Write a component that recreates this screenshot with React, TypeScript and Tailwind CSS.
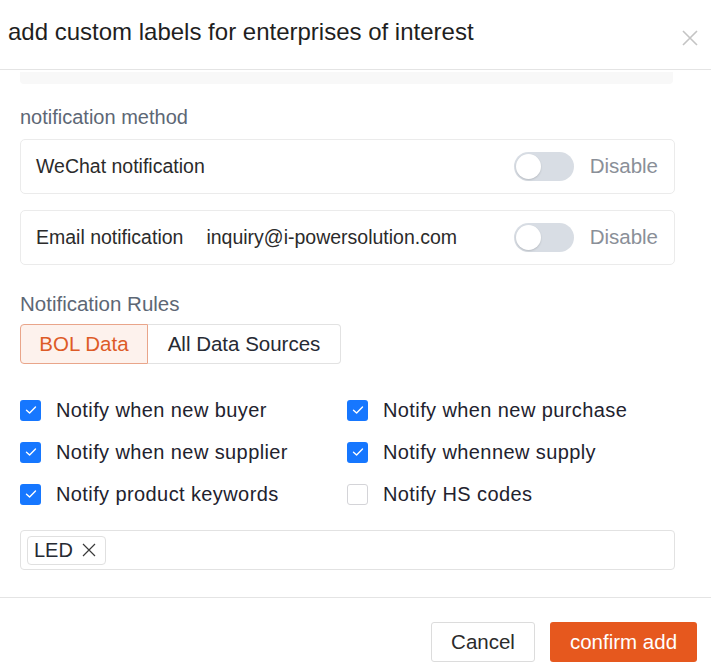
import React from 'react';

const font = { fontFamily: '"Liberation Sans", Arial, sans-serif' };

const Toggle: React.FC = () => (
    <div className="w-[60px] h-[29px] rounded-full bg-[#d8dde4] flex items-center px-[2px]">
        <div className="w-[25px] h-[25px] rounded-full bg-white shadow-[0_1px_2px_rgba(0,0,0,0.15)]" />
    </div>
);

const Check: React.FC<{ checked: boolean; label: string }> = ({ checked, label }) => (
    <div className="flex items-center h-[42px] gap-[15px]">
        {checked ? (
            <div className="w-[21px] h-[21px] rounded-[3px] bg-[#1677ff] flex items-center justify-center">
                <svg width="12" height="10" viewBox="0 0 12 10" fill="none">
                    <path d="M1.5 5.2 L4.6 8 L10.5 2" stroke="white" strokeWidth="1.4" strokeLinecap="round" strokeLinejoin="round" />
                </svg>
            </div>
        ) : (
            <div className="w-[21px] h-[21px] rounded-[3px] bg-white border border-[#d4d4d8]" />
        )}
        <span className="text-[20px] tracking-[0.4px] text-[#22222e]">{label}</span>
    </div>
);

const App: React.FC = () => {
    return (
        <div className="w-[711px] h-[669px] bg-white flex flex-col overflow-hidden" style={font}>
            {/* header */}
            <div className="h-[70px] shrink-0 border-b border-[#e4e4e4] flex items-center justify-between pl-[8px] pr-[12px]">
                <h1 className="text-[24px] text-[#1f1f1f] leading-none -mt-[5px]">add custom labels for enterprises of interest</h1>
                <svg width="18" height="18" viewBox="0 0 18 18" className="mt-[6px]">
                    <path d="M2 2 L16 16 M16 2 L2 16" stroke="#c4c4c4" strokeWidth="1.6" />
                </svg>
            </div>

            <div className="pl-[20px] pr-[36px] flex flex-col">
                <div className="h-[12px] mt-[2px] mr-[2px] bg-[#f8f8f8] rounded-b-[4px]" />

                <div className="mt-[21px] text-[20px] leading-[24px] text-[#5d6775]">notification method</div>

                <div className="mt-[10px] h-[55px] border border-[#ebebeb] rounded-[5px] flex items-center pl-[15px] pr-[16px]">
                    <span className="text-[19.5px] text-[#2b2b2b]">WeChat notification</span>
                    <div className="ml-auto flex items-center gap-[16px]">
                        <Toggle />
                        <span className="text-[20.5px] text-[#8a8f98]">Disable</span>
                    </div>
                </div>

                <div className="mt-[16px] h-[55px] border border-[#ebebeb] rounded-[5px] flex items-center pl-[15px] pr-[16px]">
                    <span className="text-[19.5px] text-[#2b2b2b]">Email notification</span>
                    <span className="text-[19.5px] text-[#2b2b2b] ml-[23px]">inquiry@i-powersolution.com</span>
                    <div className="ml-auto flex items-center gap-[16px]">
                        <Toggle />
                        <span className="text-[20.5px] text-[#8a8f98]">Disable</span>
                    </div>
                </div>

                <div className="mt-[27px] text-[20.5px] leading-[24px] text-[#5d6775]">Notification Rules</div>

                <div className="mt-[8px] flex h-[40px]">
                    <div className="w-[128px] flex items-center justify-center border border-[#e9a58a] bg-[#fdf2ed] rounded-l-[4px] text-[20.5px] text-[#dd5b27]">
                        BOL Data
                    </div>
                    <div className="w-[193px] flex items-center justify-center border border-l-0 border-[#e2e2e2] rounded-r-[4px] text-[20.5px] text-[#262a33]">
                        All Data Sources
                    </div>
                </div>

                <div className="mt-[25px] grid grid-cols-[327px_1fr]">
                    <Check checked label="Notify when new buyer" />
                    <Check checked label="Notify when new purchase" />
                    <Check checked label="Notify when new supplier" />
                    <Check checked label="Notify whennew supply" />
                    <Check checked label="Notify product keywords" />
                    <Check checked={false} label="Notify HS codes" />
                </div>

                <div className="mt-[15px] h-[40px] border border-[#e2e2e2] rounded-[4px] flex items-center px-[6px]">
                    <div className="h-[29px] pl-[6px] pr-[9px] border border-[#e0e0e0] rounded-[4px] flex items-center gap-[9px]">
                        <span className="text-[20px] text-[#262a33]">LED</span>
                        <svg width="14" height="14" viewBox="0 0 14 14">
                            <path d="M1 1 L13 13 M13 1 L1 13" stroke="#3a3a3a" strokeWidth="1.2" />
                        </svg>
                    </div>
                </div>
            </div>

            {/* footer */}
            <div className="mt-[27px] border-t border-[#e4e4e4] pt-[24px] pr-[14px] flex justify-end gap-[15px]">
                <button className="w-[104px] h-[40px] border border-[#dcdcdc] rounded-[3px] bg-white text-[20.5px] text-[#2b2b2b]">
                    Cancel
                </button>
                <button className="w-[147px] h-[40px] rounded-[3px] bg-[#e6581e] text-[20.5px] text-white">
                    confirm add
                </button>
            </div>
        </div>
    );
};

export default App;
